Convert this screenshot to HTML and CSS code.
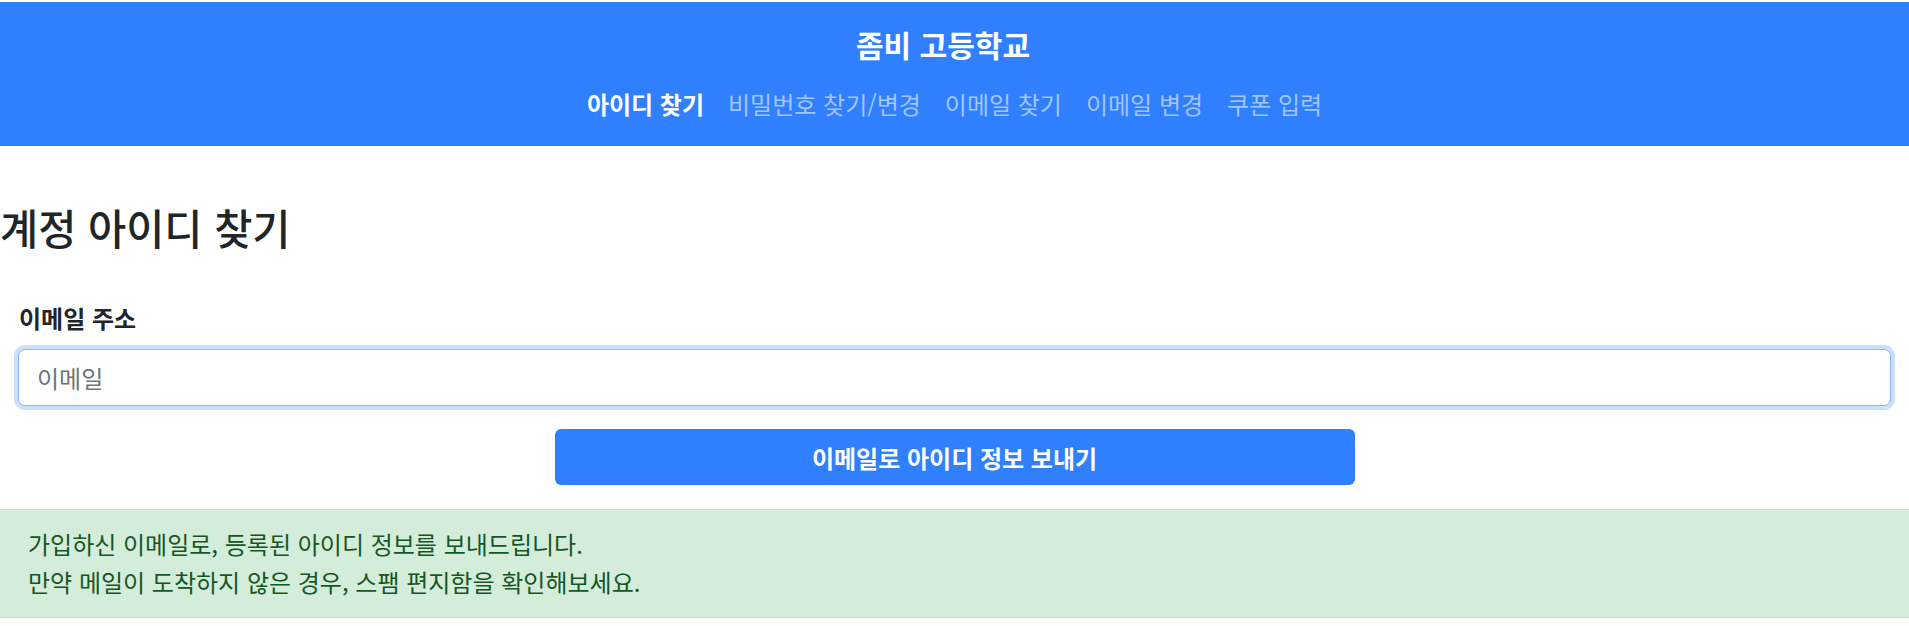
FILE: index.html
```html
<!DOCTYPE html>
<html lang="ko">
<head>
<meta charset="utf-8">
<title>계정 아이디 찾기</title>
<link rel="stylesheet" href="styles.css">
</head>
<body>
<header class="site-header">
  <div class="site-title">좀비 고등학교</div>
  <nav class="site-nav">
    <a class="nav-link active" href="#">아이디 찾기</a>
    <a class="nav-link" href="#">비밀번호 찾기/변경</a>
    <a class="nav-link" href="#">이메일 찾기</a>
    <a class="nav-link" href="#">이메일 변경</a>
    <a class="nav-link" href="#">쿠폰 입력</a>
  </nav>
</header>
<main class="page">
  <h1 class="page-title">계정 아이디 찾기</h1>
  <form class="find-form">
    <label class="field-label" for="email">이메일 주소</label>
    <input class="field-input" id="email" type="email" placeholder="이메일" autofocus>
    <div class="actions">
      <button class="btn-primary" type="button">이메일로 아이디 정보 보내기</button>
    </div>
  </form>
  <div class="notice">
    <p>가입하신 이메일로, 등록된 아이디 정보를 보내드립니다.</p>
    <p>만약 메일이 도착하지 않은 경우, 스팸 편지함을 확인해보세요.</p>
  </div>
</main>
</body>
</html>
```

FILE: styles.css
```css
* { box-sizing: border-box; }

html, body {
  margin: 0;
  background: #ffffff;
}

body {
  padding-top: 2px;
  font-family: "Noto Sans CJK KR", "Noto Sans", sans-serif;
  color: #212529;
}

.site-header {
  background: #307fff;
  height: 144px;
  display: flex;
  flex-direction: column;
  align-items: center;
  padding-top: 24px;
}

.site-title {
  font-size: 30px;
  font-weight: 700;
  line-height: 36px;
  color: #ffffff;
  padding-right: 23px;
}

.site-nav {
  margin-top: 25px;
  display: flex;
  gap: 24px;
}

.nav-link {
  font-size: 24px;
  line-height: 33px;
  color: #a2c5ff;
  text-decoration: none;
}

.nav-link.active {
  color: #ffffff;
  font-weight: 700;
}

.page {
  display: flex;
  flex-direction: column;
}

.page-title {
  margin: 57px 0 0 0;
  font-size: 41.5px;
  font-weight: 500;
  line-height: 48px;
  color: #212529;
}

.find-form {
  display: flex;
  flex-direction: column;
  padding: 0 18px;
  margin-top: 50px;
}

.field-label {
  font-size: 24px;
  font-weight: 700;
  line-height: 33px;
  padding-left: 1px;
}

.field-input {
  margin-top: 15px;
  height: 57px;
  padding: 0 18px;
  font-family: inherit;
  font-size: 24px;
  color: #212529;
  background: #ffffff;
  border: 1px solid #86b7fe;
  border-radius: 7px;
  box-shadow: 0 0 0 4px #cbdfff;
  outline: none;
}

.field-input::placeholder {
  color: #6c757d;
}

.actions {
  display: flex;
  justify-content: center;
  margin-top: 23px;
}

.btn-primary {
  width: 800px;
  height: 56px;
  border: none;
  border-radius: 6px;
  background: #307fff;
  color: #ffffff;
  font-family: inherit;
  font-size: 24px;
  font-weight: 700;
}

.notice {
  margin-top: 24px;
  background: #d4edda;
  border-top: 1px solid #c3e6cb;
  border-bottom: 1px solid #c3e6cb;
  padding: 15px 28px 16px;
  color: #155724;
  font-size: 24px;
  line-height: 38px;
}

.notice p {
  margin: 0;
}
```
